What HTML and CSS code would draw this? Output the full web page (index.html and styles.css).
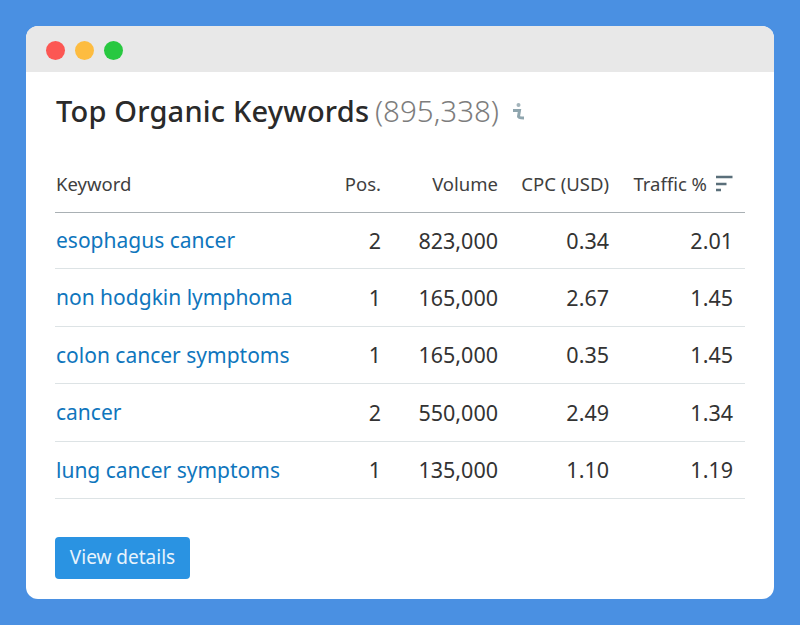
FILE: index.html
```html
<!DOCTYPE html>
<html lang="en">
<head>
<meta charset="utf-8">
<title>Top Organic Keywords</title>
<link rel="stylesheet" href="styles.css">
</head>
<body>
<main class="window">
  <header class="titlebar">
    <span class="dot dot-red"></span>
    <span class="dot dot-yellow"></span>
    <span class="dot dot-green"></span>
  </header>
  <section class="content">
    <h1 class="title">Top Organic Keywords <span class="count">(895,338)</span><svg class="info" width="13" height="17" viewBox="0 0 13 17"><circle cx="6.500" cy="2" r="2" fill="#a3b4bb"/><path d="M1 7.500h6.500l-1 6q0 1.500 5.500 1.500" stroke="#8fa5ae" stroke-width="3" fill="none"/></svg></h1>
    <table class="table">
      <colgroup>
        <col class="col-kw"><col class="col-pos"><col class="col-vol"><col class="col-cpc"><col class="col-tr">
      </colgroup>
      <thead>
        <tr>
          <th class="left">Keyword</th>
          <th>Pos.</th>
          <th>Volume</th>
          <th>CPC (USD)</th>
          <th><span class="traffic">Traffic %<svg class="sort" width="17" height="18" viewBox="0 0 17 18"><path d="M0 3h16.500M0 10h10.500M0 16h5" stroke="#5a6f7a" stroke-width="2.400" fill="none"/></svg></span></th>
        </tr>
      </thead>
      <tbody>
        <tr class="r56"><td class="left"><a href="#">esophagus cancer</a></td><td>2</td><td>823,000</td><td>0.34</td><td>2.01</td></tr>
        <tr class="r58"><td class="left"><a href="#">non hodgkin lymphoma</a></td><td>1</td><td>165,000</td><td>2.67</td><td>1.45</td></tr>
        <tr class="r57"><td class="left"><a href="#">colon cancer symptoms</a></td><td>1</td><td>165,000</td><td>0.35</td><td>1.45</td></tr>
        <tr class="r58"><td class="left"><a href="#">cancer</a></td><td>2</td><td>550,000</td><td>2.49</td><td>1.34</td></tr>
        <tr class="r57"><td class="left"><a href="#">lung cancer symptoms</a></td><td>1</td><td>135,000</td><td>1.10</td><td>1.19</td></tr>
      </tbody>
    </table>
    <a class="button" href="#">View details</a>
  </section>
</main>
</body>
</html>
```
FILE: styles.css
```css
* { box-sizing: border-box; }
html, body { margin: 0; height: 100%; }
body {
  width: 800px;
  height: 625px;
  overflow: hidden;
  background: #4a90e2;
  padding: 26px;
  font-family: "Noto Sans", "Open Sans", sans-serif;
}
.window {
  width: 748px;
  height: 573px;
  background: #fff;
  border-radius: 12px;
  overflow: hidden;
}
.titlebar {
  height: 46px;
  background: #e8e8e8;
  display: flex;
  align-items: center;
  gap: 10px;
  padding: 3px 0 0 20px;
}
.dot { width: 19px; height: 19px; border-radius: 50%; }
.dot-red { background: #fc5753; }
.dot-yellow { background: #fdbc40; }
.dot-green { background: #28c840; }
.content { padding: 19px 29px 0 29px; }
.title {
  display: flex;
  align-items: center;
  margin: 0;
  height: 40px;
  padding-left: 1px;
  font-size: 29px;
  line-height: 40px;
  font-weight: 500;
  letter-spacing: 0.2px;
  color: #2a2a2a;
  white-space: pre;
}
.count {
  margin-left: -2px;
  font-weight: 300;
  color: #7d7d7d;
  font-size: 29.500px;
  letter-spacing: 0;
}
.info { margin-left: 13px; }
.table {
  width: 690px;
  margin-top: 26px;
  border-collapse: collapse;
  table-layout: fixed;
}
.col-kw { width: 270px; }
.col-pos { width: 56px; }
.col-vol { width: 117px; }
.col-cpc { width: 111px; }
.col-tr { width: 136px; }
th {
  height: 55px;
  padding: 0 0 2px;
  text-align: right;
  font-weight: 400;
  font-size: 18.500px;
  color: #3f3f3f;
  border-bottom: 1px solid #a9b0b4;
}
th:last-child { padding-right: 12px; }
td:last-child { padding-right: 12px; }
td {
  padding: 0;
  text-align: right;
  font-size: 21.500px;
  color: #333;
  border-bottom: 1px solid #dde3e5;
  white-space: nowrap;
}
.r56 td { height: 56px; }
.r58 td { height: 58px; }
.r57 td { height: 57px; }
th.left, td.left { text-align: left; padding-left: 1px; }
td.left { font-size: 21px; }
td a { color: #0f76bd; text-decoration: none; }
.traffic { display: inline-flex; align-items: center; gap: 9px; }
.button {
  display: flex;
  align-items: center;
  justify-content: center;
  width: 135px;
  height: 42px;
  margin-top: 38px;
  padding-bottom: 2px;
  background: #2a93e2;
  border-radius: 4px;
  color: #e8f3fc;
  font-size: 19px;
  text-decoration: none;
}
```
